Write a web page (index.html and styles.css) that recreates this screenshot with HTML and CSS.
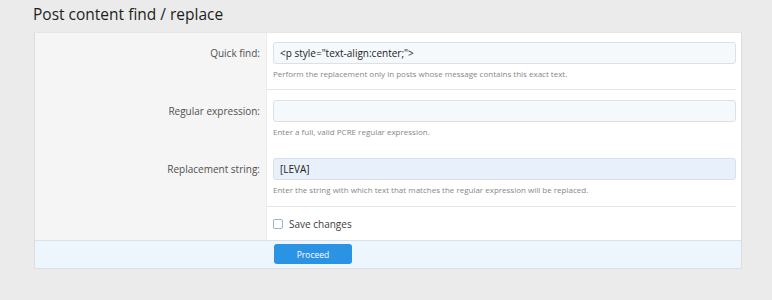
FILE: index.html
```html
<!DOCTYPE html>
<html lang="en">
<head>
    <meta charset="UTF-8">
    <title>Post content find / replace</title>
    <link rel="stylesheet" href="styles.css">
</head>
<body>
    <div class="page">
        <h1 class="page-title">Post content find / replace</h1>

        <form class="block">
            <div class="form-row">
                <label class="form-label">Quick find:</label>
                <div class="form-field has-sep">
                    <input type="text" class="input" value='&lt;p style="text-align:center;"&gt;'>
                    <div class="hint">Perform the replacement only in posts whose message contains this exact text.</div>
                </div>
            </div>

            <div class="form-row">
                <label class="form-label">Regular expression:</label>
                <div class="form-field">
                    <input type="text" class="input" value="">
                    <div class="hint">Enter a full, valid PCRE regular expression.</div>
                </div>
            </div>

            <div class="form-row">
                <label class="form-label">Replacement string:</label>
                <div class="form-field has-sep">
                    <input type="text" class="input input-filled" value="[LEVA]">
                    <div class="hint">Enter the string with which text that matches the regular expression will be replaced.</div>
                </div>
            </div>

            <div class="form-row">
                <div class="form-label"></div>
                <div class="form-field check-field">
                    <label class="check">
                        <span class="check-box"></span>
                        Save changes
                    </label>
                </div>
            </div>

            <div class="form-footer">
                <div class="footer-spacer"></div>
                <button type="button" class="btn-proceed">Proceed</button>
            </div>
        </form>
    </div>
</body>
</html>
```

FILE: styles.css
```css
* {
    margin: 0;
    padding: 0;
    box-sizing: border-box;
}

body {
    background-color: #ebebeb;
    font-family: 'Open Sans', 'Noto Sans', sans-serif;
    color: #141414;
}

.page {
    padding: 3px 30px 0 34px;
}

.page-title {
    font-size: 15.5px;
    font-weight: 400;
    line-height: 22px;
    margin-left: -1px;
    margin-bottom: 7px;
    color: #1d1d1d;
}

.block {
    width: 708px;
    background-color: #ffffff;
    border: 1px solid #dedede;
    border-top-color: #e6e6e6;
    box-shadow: 0 1px 1px rgba(0, 0, 0, 0.04);
}

.form-row {
    display: grid;
    grid-template-columns: 232px 1fr;
}

.form-label {
    background-color: #f5f5f5;
    border-right: 1px solid #ececec;
    text-align: right;
    padding: 10px 6px 0 0;
    font-size: 10px;
    line-height: 22px;
    color: #505050;
}

.form-row:first-child .form-label {
    padding-top: 9px;
}

.form-field {
    padding: 10px 0 10px 6px;
    margin-right: 5px;
}

.form-row:first-child .form-field {
    padding-top: 9px;
    padding-bottom: 9px;
}

.has-sep {
    border-bottom: 1px solid #e4e4e4;
}

.input {
    display: block;
    width: 100%;
    height: 22px;
    padding: 0 6px;
    border: 1px solid #dbe1e7;
    border-radius: 3px;
    background-color: #f6f9fc;
    font-family: inherit;
    font-size: 10px;
    color: #222222;
}

.input-filled {
    background-color: #e8f0fc;
}

.hint {
    margin-top: 4px;
    font-size: 8px;
    line-height: 12px;
    color: #878787;
}

.check-field {
    padding: 10px 0 9px 6px;
}

.check {
    display: flex;
    align-items: center;
    gap: 6px;
    font-size: 10px;
    line-height: 14px;
    color: #3c3c3c;
}

.check-box {
    width: 10px;
    height: 10px;
    border: 1px solid #9db4ca;
    border-radius: 2px;
    background-color: #ffffff;
}

.form-footer {
    display: grid;
    grid-template-columns: 239px 1fr;
    padding: 3px 0 4px;
    background-color: #edf6fd;
    border-top: 1px solid #d8e2ea;
}

.btn-proceed {
    width: 78px;
    height: 20px;
    border: none;
    border-radius: 3px;
    background-color: #2b93e3;
    color: #ffffff;
    font-family: inherit;
    font-size: 8.5px;
    cursor: pointer;
}
```
